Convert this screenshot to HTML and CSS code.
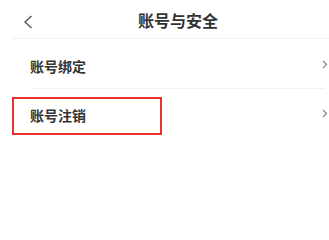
FILE: index.html
```html
<!DOCTYPE html>
<html lang="zh">
<head>
<meta charset="utf-8">
<link rel="stylesheet" href="styles.css">
</head>
<body>
<div class="page">
  <header class="header">
    <svg class="back" width="10" height="14" viewBox="0 0 10 14"><path d="M8.5 1 L2 7 L8.5 13" fill="none" stroke="#555" stroke-width="1.4"/></svg>
    <div class="title">账号与安全</div>
  </header>
  <div class="list">
    <div class="row">
      <span class="label">账号绑定</span>
      <svg class="chev" width="6" height="9" viewBox="0 0 6 9"><path d="M1 1 L4.5 4.5 L1 8" fill="none" stroke="#888" stroke-width="1.2"/></svg>
    </div>
    <div class="sep"></div>
    <div class="row row-marked">
      <span class="label">账号注销</span>
      <svg class="chev" width="6" height="9" viewBox="0 0 6 9"><path d="M1 1 L4.5 4.5 L1 8" fill="none" stroke="#888" stroke-width="1.2"/></svg>
      <div class="mark"></div>
    </div>
  </div>
</div>
</body>
</html>
```
FILE: styles.css
```css
html, body {
  margin: 0;
  padding: 0;
  background: #fff;
}
.page {
  width: 329px;
  height: 212px;
  font-family: "Noto Sans CJK SC", "Noto Sans", sans-serif;
  color: #333;
}
.header {
  display: flex;
  align-items: center;
  height: 39px;
  padding-left: 23px;
  position: relative;
}
.header::after {
  content: "";
  position: absolute;
  left: 12px;
  right: 0;
  bottom: 0;
  height: 1px;
  background: #f1f1f1;
}
.back {
  display: block;
  margin-top: 5px;
}
.title {
  margin-left: 105px;
  font-size: 16px;
  font-weight: 700;
  line-height: 20px;
  margin-top: 1px;
  color: #333;
}
.list {
  padding-top: 1px;
}
.row {
  display: flex;
  align-items: center;
  justify-content: space-between;
  height: 48px;
  padding-left: 30px;
  padding-right: 1px;
  position: relative;
}
.label {
  font-size: 14px;
  font-weight: 700;
  line-height: 18px;
  margin-top: 3px;
}
.chev {
  display: block;
  margin-top: 1px;
}
.sep {
  height: 1px;
  background: #f2f2f2;
  margin-left: 32px;
  margin-right: 4px;
}
.row-marked .mark {
  position: absolute;
  left: 12px;
  top: 8px;
  width: 146px;
  height: 34px;
  border: 2px solid #e8322c;
}
```
